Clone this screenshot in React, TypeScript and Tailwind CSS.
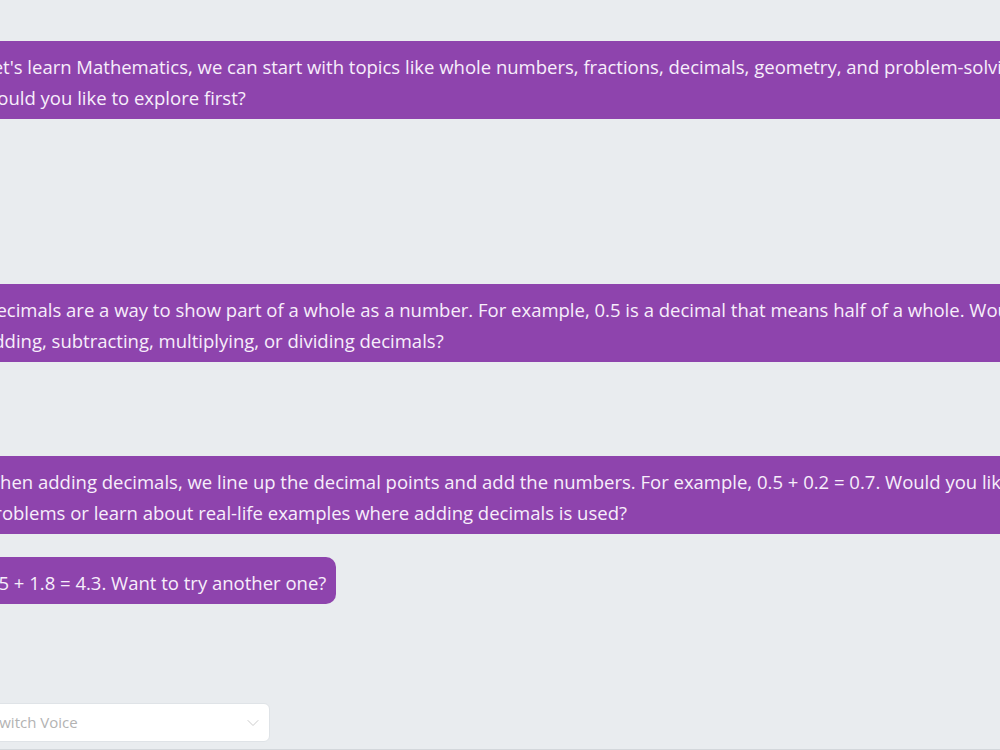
import React from 'react';
import { ChevronDown } from 'lucide-react';

const messages = [
  {
    id: 1,
    lines: [
      "Let's learn Mathematics, we can start with topics like whole numbers, fractions, decimals, geometry, and problem-solving. Which topic",
      'would you like to explore first?',
    ],
    gap: 'mt-0',
  },
  {
    id: 2,
    lines: [
      'Decimals are a way to show part of a whole as a number. For example, 0.5 is a decimal that means half of a whole. Would you like to learn about',
      'adding, subtracting, multiplying, or dividing decimals?',
    ],
    gap: 'mt-[165px]',
  },
  {
    id: 3,
    lines: [
      'When adding decimals, we line up the decimal points and add the numbers. For example, 0.5 + 0.2 = 0.7. Would you like to practice some',
      'problems or learn about real-life examples where adding decimals is used?',
    ],
    gap: 'mt-[94px]',
  },
  {
    id: 4,
    lines: ['2.5 + 1.8 = 4.3. Want to try another one?'],
    gap: 'mt-[23px]',
  },
];

const App: React.FC = () => {
  return (
    <div
      className="h-[750px] w-full overflow-hidden bg-[#e9ecef] flex flex-col"
      style={{ fontFamily: '"Open Sans", "Noto Sans", sans-serif' }}
    >
      {/* chat messages */}
      <div className="flex-1 -ml-[27px] pt-[41px] flex flex-col items-start">
        {messages.map((m) => (
          <div
            key={m.id}
            className={`${m.gap} shrink-0 bg-[#8e44ad] text-[#f7eefb] rounded-[10px] px-[10px] pt-[10px] pb-[6px] text-[18.5px] leading-[31px] whitespace-nowrap`}
          >
            {m.lines.map((l, i) => (
              <div key={i}>{l}</div>
            ))}
          </div>
        ))}
      </div>

      {/* voice selector */}
      <div className="-ml-[22px] pb-[7px] border-b border-[#d3d7db]">
        <div className="w-[292px] h-[39px] bg-white border border-[#dfe3e7] rounded-md flex items-center justify-between pl-3 pr-[6px]">
          <span className="text-[15px] text-[#b3b3b3]">Switch Voice</span>
          <ChevronDown className="w-5 h-5 text-[#cccccc]" strokeWidth={1.2} />
        </div>
      </div>
    </div>
  );
};

export default App;
